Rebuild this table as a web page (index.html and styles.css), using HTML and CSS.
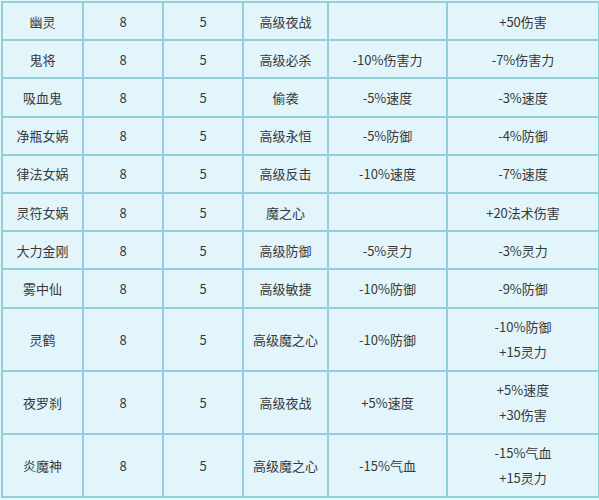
FILE: index.html
```html
<!DOCTYPE html>
<html lang="zh">
<head>
<meta charset="utf-8">
<link rel="stylesheet" href="styles.css">
</head>
<body>
<table class="grid">
  <colgroup>
    <col class="c1"><col class="c2"><col class="c3"><col class="c4"><col class="c5"><col class="c6">
  </colgroup>
  <tr><td>幽灵</td><td>8</td><td>5</td><td>高级夜战</td><td></td><td>+50伤害</td></tr>
  <tr><td>鬼将</td><td>8</td><td>5</td><td>高级必杀</td><td>-10%伤害力</td><td>-7%伤害力</td></tr>
  <tr><td>吸血鬼</td><td>8</td><td>5</td><td>偷袭</td><td>-5%速度</td><td>-3%速度</td></tr>
  <tr><td>净瓶女娲</td><td>8</td><td>5</td><td>高级永恒</td><td>-5%防御</td><td>-4%防御</td></tr>
  <tr><td>律法女娲</td><td>8</td><td>5</td><td>高级反击</td><td>-10%速度</td><td>-7%速度</td></tr>
  <tr><td>灵符女娲</td><td>8</td><td>5</td><td>魔之心</td><td></td><td>+20法术伤害</td></tr>
  <tr><td>大力金刚</td><td>8</td><td>5</td><td>高级防御</td><td>-5%灵力</td><td>-3%灵力</td></tr>
  <tr><td>雾中仙</td><td>8</td><td>5</td><td>高级敏捷</td><td>-10%防御</td><td>-9%防御</td></tr>
  <tr><td>灵鹤</td><td>8</td><td>5</td><td>高级魔之心</td><td>-10%防御</td><td>-10%防御<br>+15灵力</td></tr>
  <tr><td>夜罗刹</td><td>8</td><td>5</td><td>高级夜战</td><td>+5%速度</td><td>+5%速度<br>+30伤害</td></tr>
  <tr><td>炎魔神</td><td>8</td><td>5</td><td>高级魔之心</td><td>-15%气血</td><td>-15%气血<br>+15灵力</td></tr>
</table>
</body>
</html>
```

FILE: styles.css
```css
html, body {
  margin: 0;
  padding: 0;
  background: #e4f6fb;
}
.grid {
  border-collapse: collapse;
  table-layout: fixed;
  width: 597px;
  margin: 1px 0 0 1px;
  background: #e2f5fb;
  font-family: "Noto Sans CJK SC", "Noto Sans", sans-serif;
  font-size: 13px;
  color: #383838;
}
.grid td {
  border: 2px solid #8fd0db;
  text-align: center;
  vertical-align: middle;
  line-height: 25px;
  padding: 5.6px 0;
}
.c1 { width: 81px; }
.c2 { width: 80px; }
.c3 { width: 80px; }
.c4 { width: 85px; }
.c5 { width: 119px; }
.c6 { width: 152px; }
```
